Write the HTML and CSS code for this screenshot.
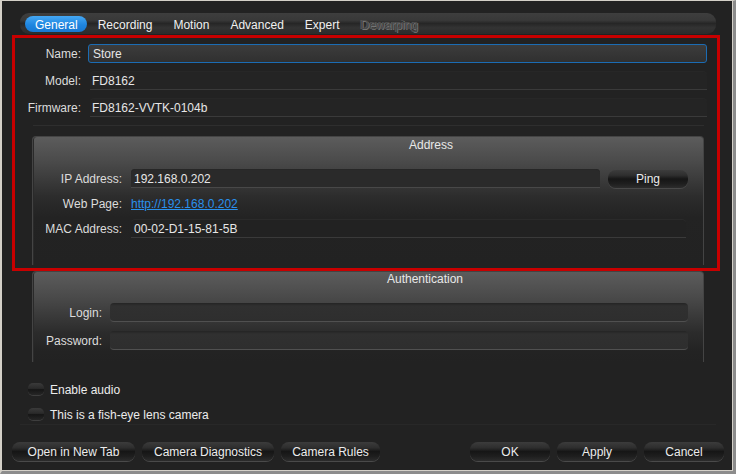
FILE: index.html
```html
<!DOCTYPE html>
<html>
<head>
<meta charset="utf-8">
<link rel="stylesheet" href="styles.css">
</head>
<body>
<div class="window">
  <div class="tabs">
    <span class="tab active">General</span>
    <span class="tab">Recording</span>
    <span class="tab">Motion</span>
    <span class="tab">Advanced</span>
    <span class="tab">Expert</span>
    <span class="tab disabled">Dewarping</span>
  </div>

  <div class="info-grid">
    <div class="lbl">Name:</div>
    <div class="input focus">Store</div>
    <div class="lbl">Model:</div>
    <div class="field">FD8162</div>
    <div class="lbl">Firmware:</div>
    <div class="field">FD8162-VVTK-0104b</div>
  </div>
  <div class="sep top-sep"></div>

  <div class="group address">
    <div class="group-title addr-title">Address</div>
    <div class="addr-grid">
      <div class="lbl">IP Address:</div>
      <div class="ip-line">
        <div class="field ip-field">192.168.0.202</div>
        <div class="btn ping">Ping</div>
      </div>
      <div class="lbl">Web Page:</div>
      <div class="link-cell"><a class="link">http://192.168.0.202</a></div>
      <div class="lbl">MAC Address:</div>
      <div class="field mac-field">00-02-D1-15-81-5B</div>
    </div>
  </div>

  <div class="group auth">
    <div class="group-title auth-title">Authentication</div>
    <div class="auth-grid">
      <div class="lbl">Login:</div>
      <div class="input dark"></div>
      <div class="lbl">Password:</div>
      <div class="input dark"></div>
    </div>
  </div>

  <div class="checks">
    <div class="check"><span class="box"></span><span class="check-text">Enable audio</span></div>
    <div class="check"><span class="box"></span><span class="check-text">This is a fish-eye lens camera</span></div>
  </div>
  <div class="sep bottom-sep"></div>

  <div class="buttons">
    <div class="btn-group">
      <div class="btn w-open">Open in New Tab</div>
      <div class="btn w-diag">Camera Diagnostics</div>
      <div class="btn w-rules">Camera Rules</div>
    </div>
    <div class="btn-group">
      <div class="btn w-80">OK</div>
      <div class="btn w-80">Apply</div>
      <div class="btn w-80">Cancel</div>
    </div>
  </div>

  <div class="highlight"></div>
</div>
</body>
</html>
```

FILE: styles.css
```css
* { box-sizing: border-box; }
html, body { margin: 0; padding: 0; background: #222; }
body {
  font-family: "Liberation Sans", Arial, sans-serif;
  font-size: 12px;
  color: #e6e6e6;
}
.window {
  position: relative;
  width: 736px;
  height: 474px;
  background: #222222;
  border-style: solid;
  border-width: 1px 3px 3px 2px;
  border-color: #d4d0c8 #8c8c8c #8c8c8c #d4d0c8;
  box-shadow: inset -1px -1px 0 #d4d0c8;
  overflow: hidden;
}

/* Tabs */
.tabs {
  margin: 12px 17px 0 18px;
  height: 21px;
  border-radius: 9px;
  background: linear-gradient(#3e3e3e 0%, #383838 35%, #262626 50%, #333 70%, #2c2c2c 100%);
  display: flex;
  align-items: center;
  padding-left: 5px;
  gap: 1px;
}
.tab {
  height: 16px;
  line-height: 18px;
  padding: 0 10px;
  border-radius: 8px;
  color: #f0f0f0;
  white-space: nowrap;
}
.tab.active {
  background: linear-gradient(#45a8f4, #1f86e0 55%, #1778d2);
  color: #fff;
  padding: 0 9px 0 10px;
}
.tab.disabled {
  color: #4a4a4a;
  text-shadow: 1px 1px 0 #747474, -1px 0 0 #5a5a5a;
}

/* Top info */
.lbl {
  text-align: right;
  color: #dcdcdc;
  height: 19px;
  line-height: 21px;
  white-space: nowrap;
}
.info-grid {
  margin: 10px 26px 0 0;
  display: grid;
  grid-template-columns: 79px 1fr;
  column-gap: 7px;
  row-gap: 8px;
}
.input {
  height: 19px;
  line-height: 19px;
  padding-left: 4px;
  border-radius: 3px;
  background: linear-gradient(#3c3c3c, #303030);
}
.input.focus {
  border: 1px solid #1b6cb4;
}
.field {
  height: 19px;
  line-height: 20px;
  padding-left: 2px;
  margin-left: 2px;
  border-radius: 4px 4px 0 0;
  background: #242424;
  border-bottom: 1px solid #3a3a3a;
  box-shadow: inset 0 1px 0 #272727;
  white-space: nowrap;
}
.sep {
  height: 1px;
  background: #2e2e2e;
}
.top-sep { margin: 8px 29px 0 31px; }

/* Groups */
.group {
  margin: 0 29px 0 30px;
  border: 1px solid #444;
  border-bottom: none;
  border-radius: 4px 4px 0 0;
  background: linear-gradient(#5c5c5c 0px, #4a4a4a 25px, #2c2c2c 60px, #232323 80px, #222 100%);
  box-shadow: inset 1px 0 0 #2a2a2a;
}
.address { margin-top: 10px; padding-bottom: 27px; }
.auth { margin-top: 6px; padding-bottom: 12px; }
.group-title {
  text-align: center;
  line-height: 14px;
  color: #e8e8e8;
}
.addr-title { padding-top: 1px; padding-left: 126px; }
.auth-title { padding-left: 114px; }

.addr-grid {
  margin-top: 17px;
  display: grid;
  grid-template-columns: 89px 1fr;
  column-gap: 9px;
  row-gap: 6px;
  padding-right: 15px;
}
.ip-line {
  display: flex;
  gap: 8px;
  align-items: flex-start;
}
.ip-line .ip-field {
  flex: 1;
  margin-left: 0;
  padding-left: 3px;
  background: #2a2a2a;
  border-bottom-color: #484848;
}
.mac-field {
  margin-left: 0;
  padding-left: 3px;
  margin-right: 2px;
  background: #222;
  border-bottom-color: #3a3a3a;
  box-shadow: inset 0 1px 0 #2a2a2a;
}
.link-cell { height: 19px; line-height: 21px; }
.link {
  color: #2a90ec;
  text-decoration: underline;
}

.auth-grid {
  margin-top: 17px;
  display: grid;
  grid-template-columns: 69px 1fr;
  column-gap: 8px;
  row-gap: 9px;
  padding-right: 15px;
}
.input.dark {
  border-radius: 4px;
  background: linear-gradient(#242424 0px, #303030 3px, #2e2e2e 100%);
  border-bottom: 1px solid #505050;
}

/* Buttons */
.btn {
  height: 19px;
  line-height: 21px;
  text-align: center;
  border-radius: 8px;
  color: #ececec;
  white-space: nowrap;
  background: linear-gradient(#3c3c3c 0%, #2e2e2e 30%, #161616 50%, #1e1e1e 75%, #2c2c2c 100%);
  box-shadow: 0 1px 0 #4a4a4a;
}
.ping { width: 80px; margin-top: 1px; height: 18px; line-height: 19px; }

/* Checks */
.checks {
  margin: 19px 0 0 26px;
  display: flex;
  flex-direction: column;
  gap: 9px;
}
.check {
  display: flex;
  align-items: center;
  gap: 6px;
  height: 16px;
  color: #ececec;
}
.check-text { line-height: 18px; height: 16px; }
.box {
  width: 16px;
  height: 12px;
  border-radius: 5px;
  background: linear-gradient(#3a3a3a, #2a2a2a 45%, #161616 55%, #262626);
  box-shadow: 0 1px 0 #3e3e3e;
}
.bottom-sep { margin: 2px 17px 0 18px; background: #282828; }

.buttons {
  margin: 17px 9px 0 10px;
  display: flex;
  justify-content: space-between;
}
.btn-group { display: flex; gap: 7px; }
.w-open { width: 123px; }
.w-diag { width: 132px; }
.w-rules { width: 99px; }
.w-80 { width: 80px; }

/* Annotation */
.highlight {
  position: absolute;
  left: 10px;
  top: 34px;
  width: 708px;
  height: 236px;
  border: 3px solid #c80000;
  pointer-events: none;
}
```
